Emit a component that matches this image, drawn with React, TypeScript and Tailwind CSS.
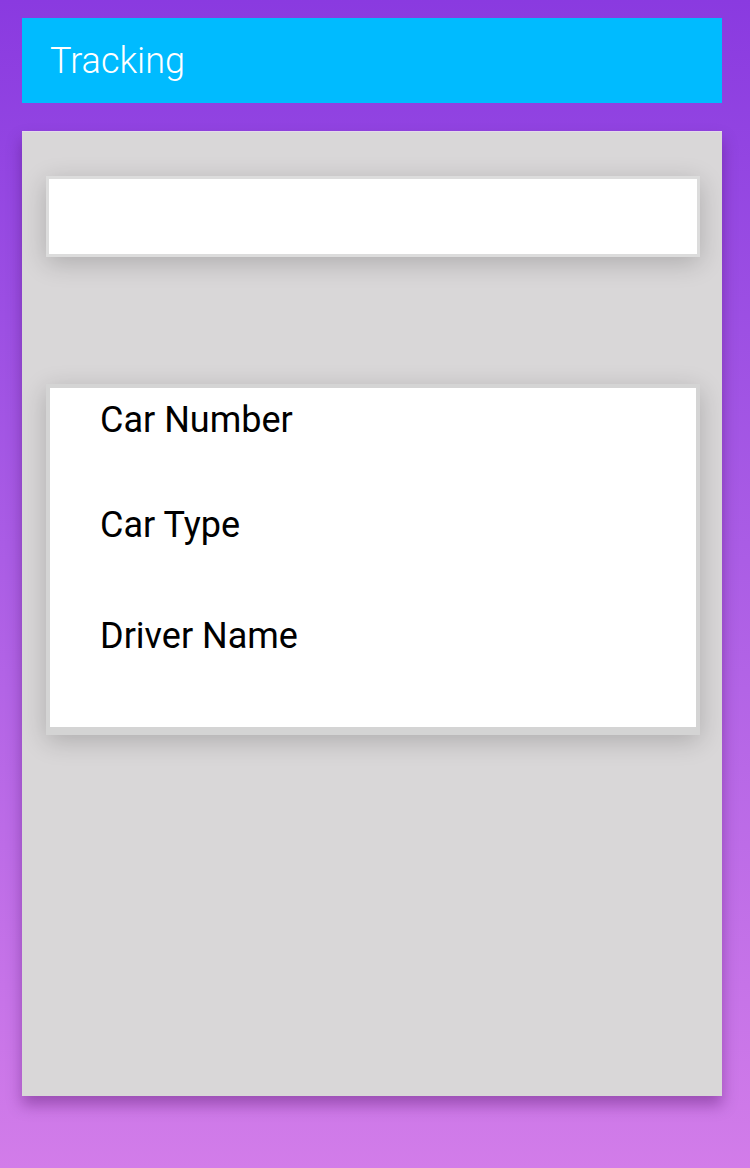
const rows = ["Car Number", "Car Type", "Driver Name"]

export default function App() {
	return (
		<div
			className="min-h-[1168px] w-full bg-gradient-to-b from-[#8a3ae0] to-[#d27ce9] pl-[22px] pr-[28px] pt-[18px] pb-[72px]"
			style={{ fontFamily: "Roboto, 'Noto Sans', sans-serif" }}
		>
			<header className="flex h-[85px] items-center bg-[#00bbff] px-[28px]">
				<h1 className="text-[36px] font-light leading-none text-white">Tracking</h1>
			</header>

			<main className="mt-[28px] h-[965px] border-t border-[#e4d9ea] bg-[#d9d7d8] pl-[24px] pr-[22px] pt-[44px] shadow-[0_9px_14px_rgba(60,0,80,0.35)]">
				<div className="h-[81px] border-[3px] border-[#dcdcdc] bg-white shadow-[0_6px_24px_rgba(0,0,0,0.2)]" />

				<div className="mt-[127px] flex h-[351px] flex-col border-[4px] border-b-[8px] border-[#d4d4d4] bg-white px-[50px] pt-[14px] shadow-[0_6px_24px_rgba(0,0,0,0.2)]">
					{rows.map((label, i) => (
						<div
							key={label}
							className={`text-[36px] leading-[36px] text-black ${i === 1 ? "mt-[69px]" : i === 2 ? "mt-[75px]" : ""}`}
						>
							{label}
						</div>
					))}
				</div>
			</main>
		</div>
	)
}
